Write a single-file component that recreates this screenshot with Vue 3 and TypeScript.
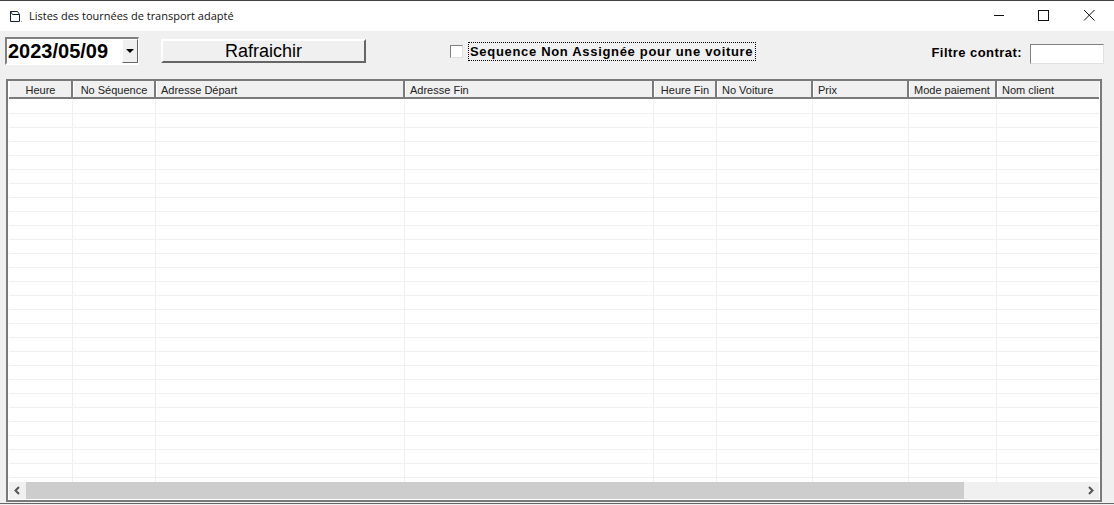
<script setup lang="ts">
interface Col { label: string; width: number; align?: string }
const cols: Col[] = [
  { label: 'Heure', width: 64, align: 'center' },
  { label: 'No Séquence', width: 83, align: 'center' },
  { label: 'Adresse Départ', width: 249 },
  { label: 'Adresse Fin', width: 249 },
  { label: 'Heure Fin', width: 63, align: 'center' },
  { label: 'No Voiture', width: 96 },
  { label: 'Prix', width: 96 },
  { label: 'Mode paiement', width: 88 },
  { label: 'Nom client', width: 103 },
]
</script>

<template>
  <div class="window">
    <header class="titlebar">
      <svg class="app-icon" width="13" height="13" viewBox="0 0 13 13">
        <path d="M1.500 1.500H8.500L10.500 4.500V11.500H1.500Z M1.500 1.500L3.500 4.500H10.500" fill="#fff" stroke="#102030" stroke-width="1" />
        <path d="M12 11h1v1h-1z" fill="#999" />
      </svg>
      <span class="title">Listes des tournées de transport adapté</span>
      <div class="controls">
        <svg width="46" height="30" viewBox="0 0 46 30"><path d="M20 14.500H30" stroke="#111" /></svg>
        <svg width="46" height="30" viewBox="0 0 46 30"><rect x="18.500" y="9.500" width="10" height="10" fill="none" stroke="#111" /></svg>
        <svg width="46" height="30" viewBox="0 0 46 30"><path d="M18 9L28.500 19.500M28.500 9L18 19.500" stroke="#111" fill="none" /></svg>
      </div>
    </header>

    <section class="toolbar">
      <div class="date">
        <span class="date-value">2023/05/09</span>
        <span class="date-btn"><i class="caret"></i></span>
      </div>
      <button class="refresh" type="button">Rafraichir</button>
      <label class="check">
        <span class="box"></span>
        <span class="check-label">Sequence Non Assignée pour une voiture</span>
      </label>
      <span class="filter-label">Filtre contrat:</span>
      <span class="filter-input"></span>
    </section>

    <section class="grid">
      <div class="head">
        <div
          v-for="(c, i) in cols"
          :key="c.label"
          class="hcell"
          :class="{ center: c.align === 'center', last: i === cols.length - 1 }"
          :style="{ width: c.width + 'px' }"
        >{{ c.label }}</div>
      </div>
      <div class="body">
        <div
          v-for="(c, i) in cols"
          :key="c.label"
          class="col"
          :class="{ last: i === cols.length - 1 }"
          :style="{ width: c.width + 'px' }"
        ></div>
      </div>
      <div class="scrollbar">
        <span class="arrow"><svg width="9" height="9" viewBox="0 0 9 9"><path d="M6 1L2.500 4.500L6 8" fill="none" stroke="#555" stroke-width="2" /></svg></span>
        <div class="track"><div class="thumb"></div></div>
        <span class="arrow"><svg width="9" height="9" viewBox="0 0 9 9"><path d="M3 1L6.500 4.500L3 8" fill="none" stroke="#555" stroke-width="2" /></svg></span>
      </div>
    </section>
  </div>
</template>

<style>
html, body { margin: 0; background: #f0f0f0; overflow: hidden; }
</style>

<style scoped>
.window {
  width: 1114px;
  height: 504px;
  box-sizing: border-box;
  border-top: 1px solid #444;
  border-bottom: 1px solid #666;
  background: #f0f0f0;
  font-family: "Liberation Sans", Arial, sans-serif;
  color: #000;
  display: flex;
  flex-direction: column;
  overflow: hidden;
}
.titlebar {
  height: 30px;
  flex: none;
  background: #fff;
  display: flex;
  align-items: center;
  padding-left: 9px;
}
.app-icon { flex: none; }
.title {
  margin-left: 7px;
  padding-bottom: 2px;
  font-family: "Open Sans", sans-serif;
  font-size: 11px;
  color: #111;
}
.controls { margin-left: auto; display: flex; margin-right: 2px; }
.toolbar {
  height: 47px;
  flex: none;
  display: flex;
  align-items: flex-start;
}
.date {
  margin: 6px 0 0 5px;
  width: 134px;
  height: 28px;
  box-sizing: border-box;
  border: 2px solid;
  border-color: #808080 #fff #fff #808080;
  border-right-width: 1px;
  background: #fff;
  display: flex;
  justify-content: space-between;
  align-items: stretch;
}
.date-value {
  font-size: 20px;
  font-weight: bold;
  line-height: 24px;
  margin-left: 1px;
}
.date-btn {
  width: 16px;
  box-sizing: border-box;
  background: #f0f0f0;
  border: 1px solid;
  border-color: #fff #666 #666 #fff;
  display: flex;
  align-items: center;
  justify-content: center;
}
.caret {
  width: 0;
  height: 0;
  border: 4px solid transparent;
  border-top: 4px solid #000;
  border-bottom: 0;
}
.refresh {
  margin: 8px 0 0 22px;
  width: 205px;
  height: 24px;
  box-sizing: border-box;
  padding: 0 0 2px;
  background: #f0f0f0;
  border: 2px solid;
  border-color: #fff #666 #666 #fff;
  font-family: inherit;
  font-size: 18px;
  color: #000;
}
.check {
  margin: 11px 0 0 84px;
  display: flex;
  align-items: center;
}
.box {
  width: 13px;
  height: 13px;
  box-sizing: border-box;
  background: #fff;
  border: 1px solid;
  border-color: #808080 #e0e0e0 #e0e0e0 #808080;
}
.check-label {
  margin-left: 5px;
  padding: 0 2px 0 1px;
  height: 19px;
  line-height: 17px;
  box-sizing: border-box;
  border: 1px dotted #000;
  font-size: 13px;
  font-weight: bold;
  letter-spacing: 0.68px;
  white-space: nowrap;
}
.filter-label {
  margin: 14px 0 0 auto;
  font-size: 13px;
  font-weight: bold;
  letter-spacing: 0.45px;
}
.filter-input {
  margin: 13px 10px 0 8px;
  width: 74px;
  height: 20px;
  box-sizing: border-box;
  background: #fff;
  border: 1px solid;
  border-color: #808080 #e0e0e0 #e0e0e0 #808080;
}
.grid {
  margin-left: 6px;
  margin-top: 1px;
  width: 1096px;
  height: 423px;
  box-sizing: border-box;
  border: 2px solid #7a7a7a;
  padding: 0 1px 1px 1px;
  background: #fff;
  display: flex;
  flex-direction: column;
  overflow: hidden;
}
.head {
  height: 18px;
  flex: none;
  display: flex;
  overflow: hidden;
  box-sizing: border-box;
  border-bottom: 2px solid #7a7a7a;
}
.hcell {
  flex: none;
  box-sizing: border-box;
  height: 16px;
  line-height: 18px;
  font-size: 11px;
  padding-left: 4px;
  background: #f0f0f0;
  border-right: 2px solid #7a7a7a;
  border-left: 1px solid #fff;
  white-space: nowrap;
  color: #222;
}
.hcell.center { text-align: center; padding-left: 0; }
.hcell.last { border-right: 0; flex: 1; }
.body {
  flex: 1;
  min-height: 0;
  display: flex;
  box-sizing: border-box;
  border-top: 1px solid #fff;
  background-image: linear-gradient(to bottom, #f0f0f0 0, #f0f0f0 1px, #fff 1px, #fff 14px);
  background-size: 100% 14px;
  background-origin: border-box;
  background-clip: padding-box;
}
.col {
  flex: none;
  box-sizing: border-box;
  border-right: 1px solid #f0f0f0;
}
.col.last { border-right: 0; flex: 1; }
.scrollbar {
  height: 17px;
  flex: none;
  display: flex;
  align-items: stretch;
  background: #f0f0f0;
}
.arrow {
  width: 17px;
  flex: none;
  display: flex;
  align-items: center;
  justify-content: center;
}
.track { flex: 1; min-width: 0; }
.thumb { width: 938px; height: 100%; background: #cdcdcd; }
</style>
